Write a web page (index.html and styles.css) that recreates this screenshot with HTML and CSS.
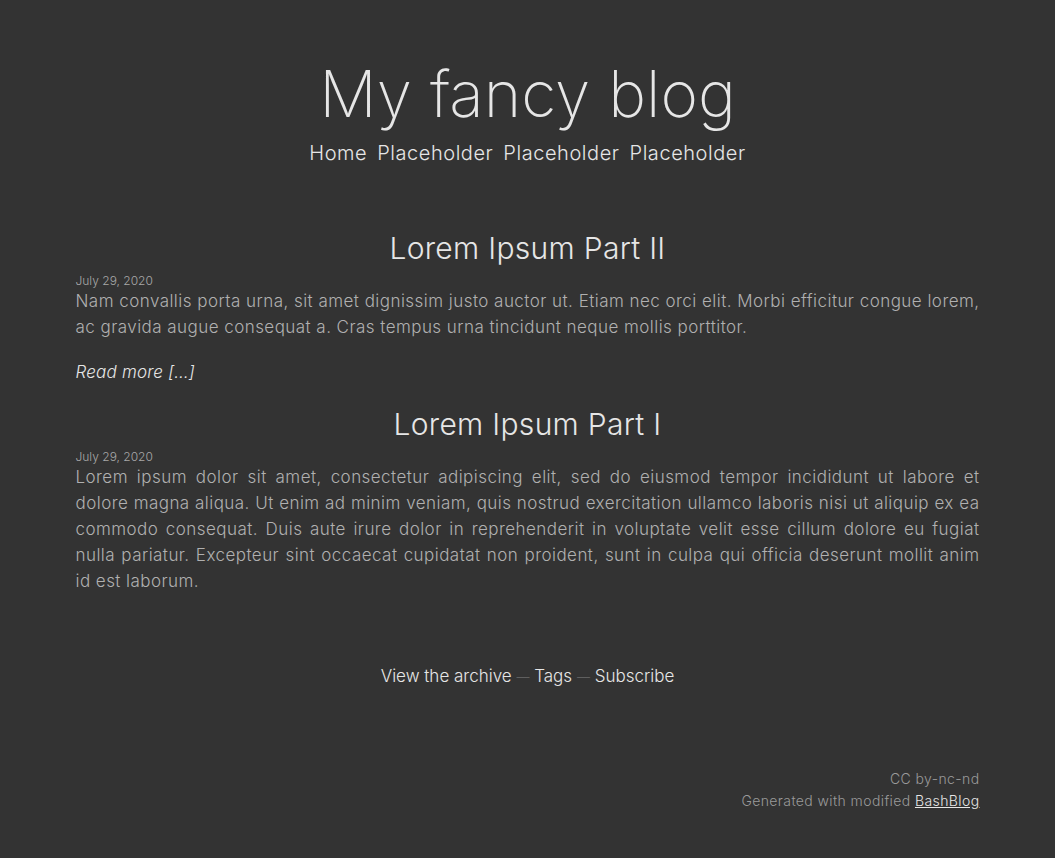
FILE: index.html
```html
<!DOCTYPE html>
<html lang="en">
<head>
<meta charset="utf-8">
<title>My fancy blog</title>
<link rel="stylesheet" href="styles.css">
</head>
<body>
<div class="page">
  <header class="header">
    <h1 class="site-title">My fancy blog</h1>
    <nav class="nav">
      <a href="#">Home</a>
      <a href="#">Placeholder</a>
      <a href="#">Placeholder</a>
      <a href="#">Placeholder</a>
    </nav>
  </header>
  <main class="posts">
    <article class="post">
      <h2 class="post-title">Lorem Ipsum Part II</h2>
      <div class="date">July 29, 2020</div>
      <p class="text">Nam convallis porta urna, sit amet dignissim justo auctor ut. Etiam nec orci elit. Morbi efficitur congue lorem, ac gravida augue consequat a. Cras tempus urna tincidunt neque mollis porttitor.</p>
      <p class="readmore"><a href="#">Read more […]</a></p>
    </article>
    <article class="post">
      <h2 class="post-title">Lorem Ipsum Part I</h2>
      <div class="date">July 29, 2020</div>
      <p class="text">Lorem ipsum dolor sit amet, consectetur adipiscing elit, sed do eiusmod tempor incididunt ut labore et dolore magna aliqua. Ut enim ad minim veniam, quis nostrud exercitation ullamco laboris nisi ut aliquip ex ea commodo consequat. Duis aute irure dolor in reprehenderit in voluptate velit esse cillum dolore eu fugiat nulla pariatur. Excepteur sint occaecat cupidatat non proident, sunt in culpa qui officia deserunt mollit anim id est laborum.</p>
    </article>
  </main>
  <div class="archive">
    <a href="#">View the archive</a> <span class="dash">—</span> <a href="#">Tags</a> <span class="dash">—</span> <a href="#">Subscribe</a>
  </div>
  <footer class="footer">
    <div>CC by-nc-nd</div>
    <div>Generated with modified <a class="u" href="#">BashBlog</a></div>
  </footer>
</div>
</body>
</html>
```
FILE: styles.css
```css
html, body {
  margin: 0;
  padding: 0;
  background: #333333;
}
body {
  font-family: Inter, "Noto Sans", sans-serif;
  font-weight: 300;
  color: #b0b0b0;
}
a {
  color: #e6e6e6;
  text-decoration: none;
}
.page {
  width: 904px;
  margin: 0 auto;
  padding-top: 56px;
}
.header {
  text-align: center;
}
.site-title {
  margin: 0;
  font-size: 64px;
  font-weight: 200;
  line-height: 76px;
  color: #e6e6e6;
}
.nav {
  display: flex;
  justify-content: center;
  gap: 10px;
  margin-top: 7px;
  font-size: 20px;
  line-height: 28px;
  letter-spacing: 0.55px;
}
.posts {
  margin-top: 62px;
}
.post-title {
  margin: 0;
  text-align: center;
  font-size: 30px;
  font-weight: 300;
  line-height: 38px;
  color: #e6e6e6;
  letter-spacing: 0.3px;
}
.date {
  font-size: 12px;
  line-height: 14px;
  margin-top: 7px;
  color: #a8a8a8;
}
.text {
  margin: 0;
  font-size: 17px;
  line-height: 26px;
  text-align: justify;
  letter-spacing: 0.45px;
}
.readmore {
  margin: 19px 0 20px;
  font-size: 17px;
  font-style: italic;
  line-height: 26px;
  letter-spacing: 0.2px;
}
.archive {
  margin-top: 69px;
  text-align: center;
  font-size: 17px;
  line-height: 26px;
}
.dash {
  display: inline-block;
  color: #6a6a6a;
  font-size: 13px;
}
.footer {
  margin-top: 78px;
  text-align: right;
  font-size: 14px;
  line-height: 22px;
  color: #9a9a9a;
  letter-spacing: 0.4px;
}
.footer .u {
  text-decoration: underline;
}
```
